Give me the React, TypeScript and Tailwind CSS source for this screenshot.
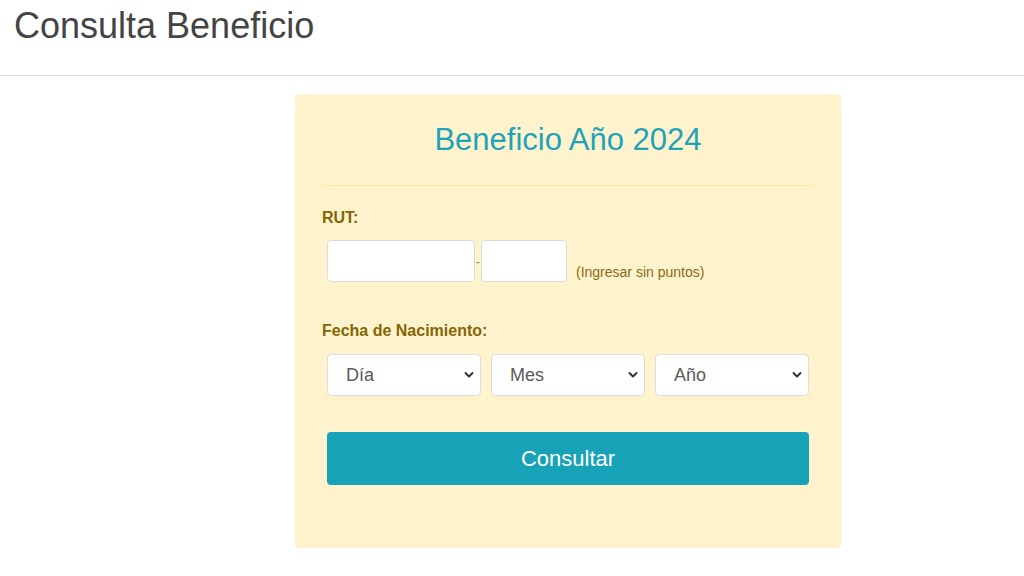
function Chevron() {
  return (
    <svg
      className="pointer-events-none absolute right-[7px] top-1/2 -translate-y-1/2"
      width="10"
      height="7"
      viewBox="0 0 10 7"
      fill="none"
    >
      <path d="M1.5 1.5 L5 5 L8.5 1.5" stroke="#333" strokeWidth="2" strokeLinecap="round" strokeLinejoin="round" />
    </svg>
  )
}

function Select({ placeholder }: { placeholder: string }) {
  return (
    <div className="relative">
      <select
        defaultValue=""
        className="h-[42px] w-full appearance-none rounded-[4px] border border-[#dcdcdc] bg-white pl-[18px] text-[18px] text-[#5a5a5a] outline-none"
      >
        <option value="">{placeholder}</option>
      </select>
      <Chevron />
    </div>
  )
}

export default function App() {
  return (
    <div className="min-h-[576px] bg-white font-['Liberation_Sans',Arial,sans-serif]">
      {/* Header */}
      <div className="h-[76px] border-b border-[#e0e0e0] px-[14px] pt-[4px]">
        <h1 className="text-[36px] leading-[43px] text-[#444]">Consulta Beneficio</h1>
      </div>

      {/* Card */}
      <div className="ml-[295px] mt-[18px] w-[546px] rounded-[4px] bg-[#fff3cd] px-[27px] pb-[63px] pt-[28px]">
        <h2 className="text-center text-[31px] leading-[36px] text-[#1fa3bb]">Beneficio Año 2024</h2>

        <div className="mt-[27px] border-t border-[#ffe8a0]" />

        <div className="mt-[20px] text-[16px] font-bold leading-[24px] text-[#856404]">RUT:</div>
        <div className="mt-[10px] flex items-end px-[5px]">
          <input className="h-[42px] w-[148px] rounded-[4px] border border-[#dcdcdc] bg-white outline-none" />
          <span className="mb-[13px] w-[6px] text-center text-[12px] leading-[14px] text-[#a08020]">-</span>
          <input className="h-[42px] w-[86px] rounded-[4px] border border-[#dcdcdc] bg-white outline-none" />
          <span className="mb-[1px] ml-[9px] text-[14px] leading-[18px] text-[#8a6a14]">(Ingresar sin puntos)</span>
        </div>

        <div className="mt-[37px] text-[16px] font-bold leading-[24px] text-[#856404]">Fecha de Nacimiento:</div>
        <div className="mt-[11px] grid grid-cols-3 gap-[10px] px-[5px]">
          <Select placeholder="Día" />
          <Select placeholder="Mes" />
          <Select placeholder="Año" />
        </div>

        <div className="mt-[36px] px-[5px]">
          <button className="h-[53px] w-full rounded-[4px] bg-[#18a2b8] text-[22px] text-white">Consultar</button>
        </div>
      </div>
    </div>
  )
}
